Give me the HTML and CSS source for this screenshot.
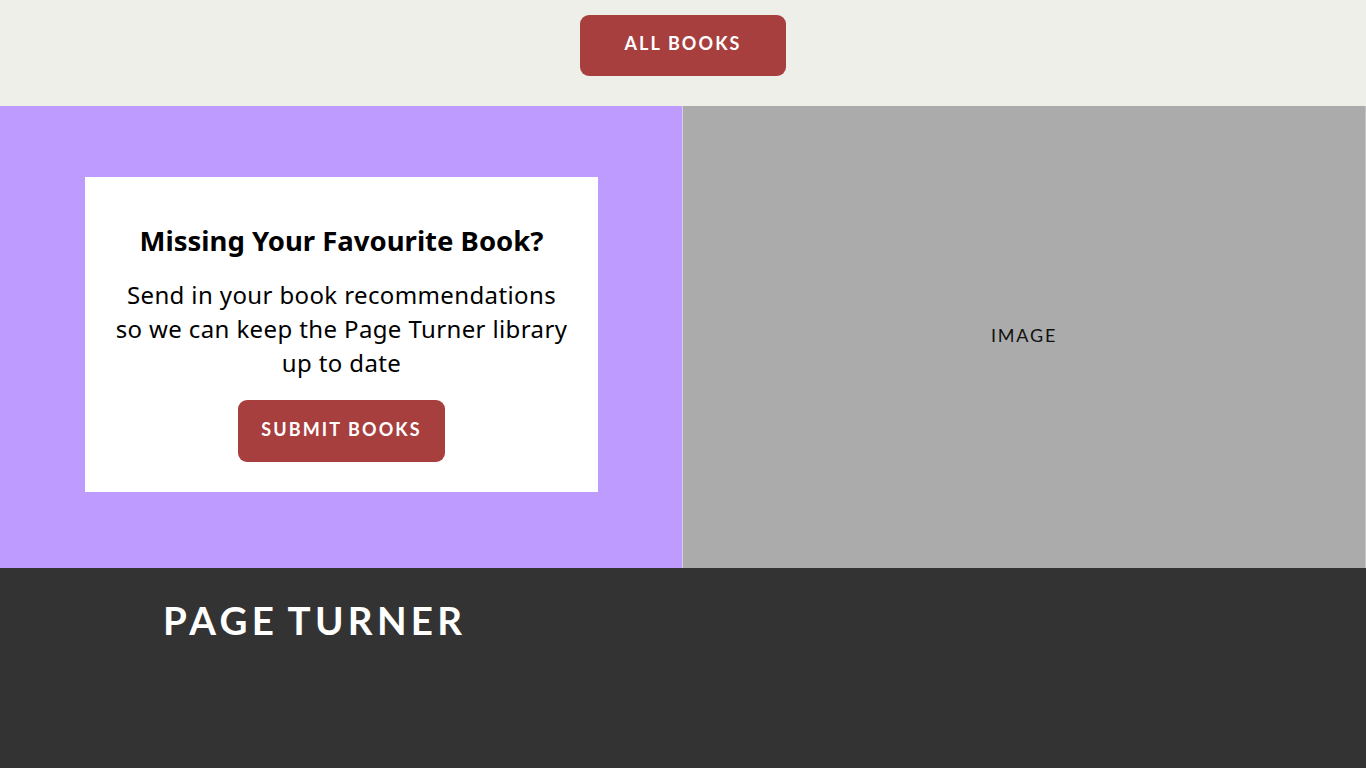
FILE: index.html
```html
<!DOCTYPE html>
<html lang="en">
<head>
<meta charset="utf-8">
<title>Page Turner</title>
<link rel="stylesheet" href="styles.css">
</head>
<body>
<header class="top">
  <a class="btn btn-top" href="#">ALL BOOKS</a>
</header>
<section class="split">
  <div class="promo">
    <div class="card">
      <h2 class="card-title">Missing Your Favourite Book?</h2>
      <p class="card-text">Send in your book recommendations so we can keep the Page Turner library up to date</p>
      <a class="btn btn-card" href="#">SUBMIT BOOKS</a>
    </div>
  </div>
  <div class="image">IMAGE</div>
</section>
<footer class="footer">
  <div class="brand">PAGE TURNER</div>
</footer>
</body>
</html>
```

FILE: styles.css
```css
* { box-sizing: border-box; }
html, body { margin: 0; padding: 0; }
body {
  width: 1366px;
  height: 768px;
  overflow: hidden;
  font-family: "Noto Sans", "Open Sans", sans-serif;
  background: #333333;
}
.top {
  height: 106px;
  background: #efefe9;
  display: flex;
  justify-content: center;
  align-items: flex-start;
  padding-top: 15px;
}
.btn {
  display: flex;
  align-items: center;
  justify-content: center;
  background: #a83f3f;
  color: #ffffff;
  text-decoration: none;
  font-family: Lato, "Noto Sans", sans-serif;
  font-weight: 700;
  font-size: 18px;
  letter-spacing: 2.1px;
  border-radius: 9px;
  padding-bottom: 5px;
}
.btn-top {
  width: 206px;
  height: 61px;
}
.split {
  display: grid;
  grid-template-columns: 682px 1fr;
  height: 462px;
}
.promo {
  background: #bd9bff;
  padding: 71px 0 0 85px;
}
.card {
  width: 513px;
  height: 315px;
  background: #ffffff;
  display: flex;
  flex-direction: column;
  align-items: center;
  padding-top: 46px;
  text-align: center;
}
.card-title {
  margin: 0;
  font-size: 27.5px;
  line-height: 36px;
  font-weight: 700;
  color: #000000;
}
.card-text {
  margin: 19px 0 0;
  width: 458px;
  font-size: 24px;
  line-height: 34px;
  letter-spacing: 0.38px;
  color: #000000;
}
.btn-card {
  margin-top: 20px;
  width: 207px;
  height: 62px;
}
.image {
  background: #ababab;
  border-left: 1px solid #d6cde6;
  border-right: 1px solid #c4c4c4;
  display: flex;
  align-items: center;
  justify-content: center;
  font-family: Lato, "Noto Sans", sans-serif;
  font-size: 18px;
  letter-spacing: 1.8px;
  color: #111111;
  padding-bottom: 4px;
}
.footer {
  height: 200px;
  background: #333333;
  padding: 28px 0 0 163px;
}
.brand {
  font-family: Lato, "Noto Sans", sans-serif;
  font-weight: 700;
  font-size: 38.5px;
  letter-spacing: 4.3px;
  word-spacing: -3px;
  color: #ffffff;
  line-height: 48px;
}
```
